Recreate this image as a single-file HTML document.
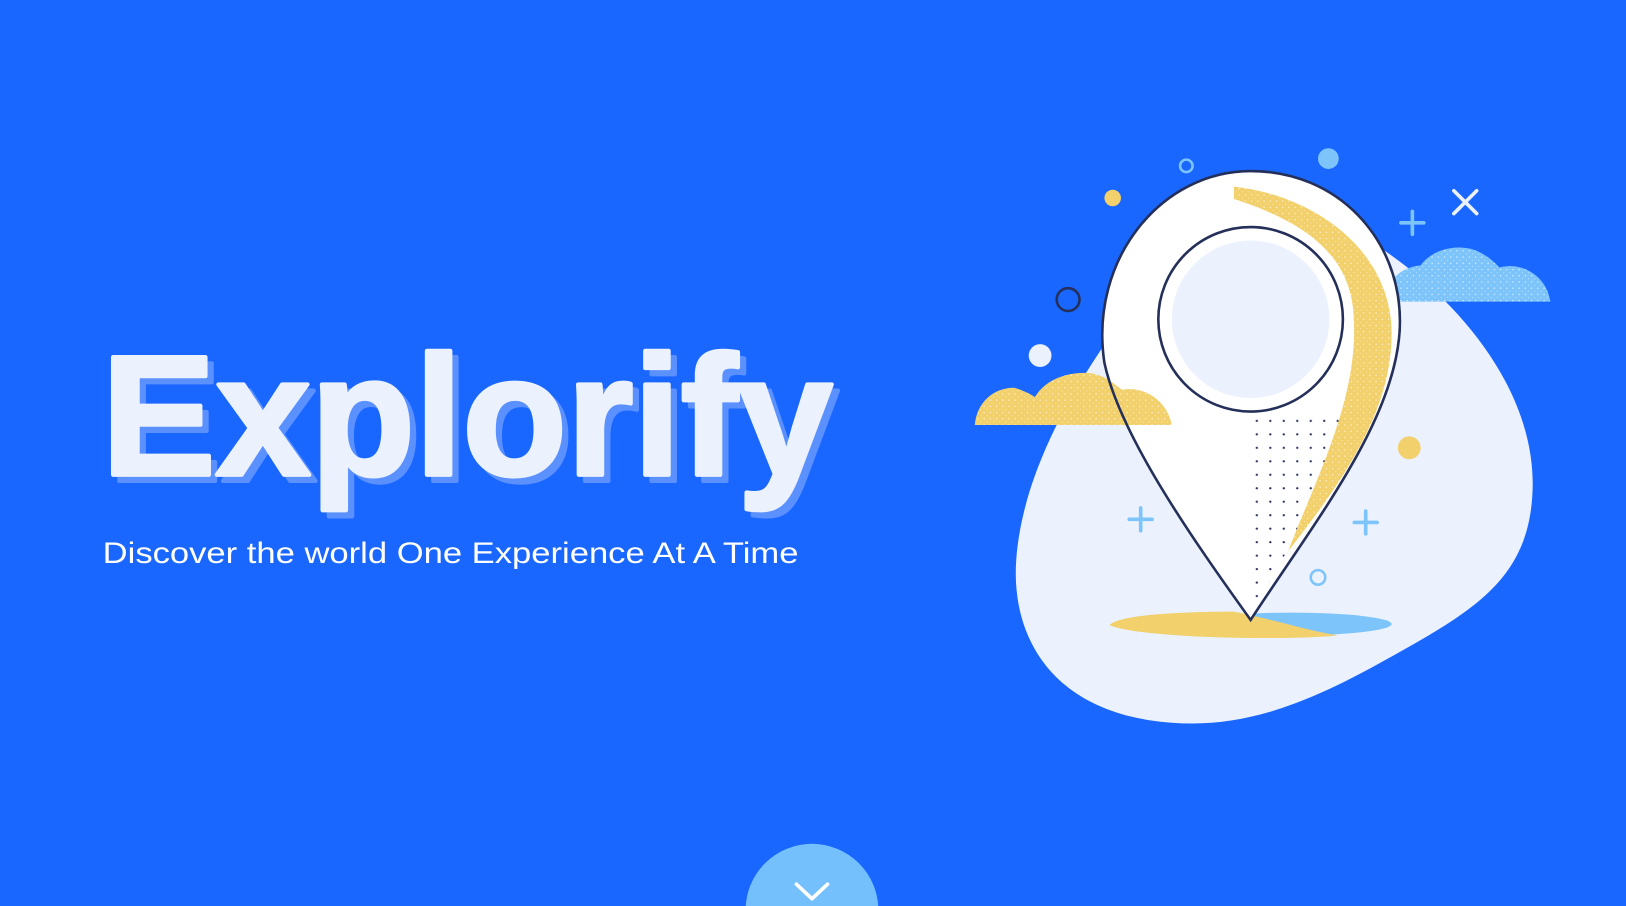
<!DOCTYPE html>
<html><head><meta charset="utf-8"><style>
html,body{margin:0;padding:0;background:#1967FF;overflow:hidden;width:1626px;height:906px}
svg{display:block}
</style></head><body>
<svg width="1626" height="906" viewBox="0 0 1568 874" preserveAspectRatio="none" xmlns="http://www.w3.org/2000/svg">
<defs>
<pattern id="dots" width="13" height="13" patternUnits="userSpaceOnUse"><circle cx="3" cy="3" r="1.1" fill="#25305A"/></pattern>
<pattern id="spk" width="6" height="6" patternUnits="userSpaceOnUse"><circle cx="1" cy="2" r="0.7" fill="#fff" opacity="0.7"/><circle cx="4" cy="5" r="0.5" fill="#fff" opacity="0.6"/></pattern>
</defs>
<rect width="1568" height="874" fill="#1967FF"/>
<g font-family="Liberation Sans, sans-serif" font-weight="bold" font-size="165" stroke-width="4" stroke-linejoin="round">
<text x="104" y="464" fill="#5B91FF" stroke="#5B91FF" textLength="705" lengthAdjust="spacingAndGlyphs">Explorify</text>
<text x="98" y="458" fill="#EBF1FD" stroke="#EBF1FD" textLength="705" lengthAdjust="spacingAndGlyphs">Explorify</text>
</g>
<text x="99" y="543" fill="#fff" font-family="Liberation Sans, sans-serif" font-size="29" textLength="671" lengthAdjust="spacingAndGlyphs">Discover the world One Experience At A Time</text>
<path d="M1290,215 C1380,260 1480,360 1478,470 C1476,560 1420,590 1330,640 C1240,690 1180,705 1110,695 C1010,680 975,610 980,540 C985,470 1020,400 1060,340 C1110,260 1200,170 1290,215Z" fill="#EBF1FD"/>
<path d="M1335,291 C1338,270 1350,258 1370,256 C1380,242 1400,236 1418,240 C1432,244 1440,252 1446,258 C1470,252 1492,268 1495,291 Z" fill="#7DC4FB"/>
<path d="M1335,291 C1338,270 1350,258 1370,256 C1380,242 1400,236 1418,240 C1432,244 1440,252 1446,258 C1470,252 1492,268 1495,291 Z" fill="url(#spk)"/>
<ellipse cx="1245" cy="602" rx="97" ry="11" fill="#7DC4FB"/>
<path d="M1070,603 C1080,592 1150,590 1190,590 C1230,598 1260,608 1290,613 C1240,618 1100,616 1070,603Z" fill="#F2D06B"/>
<path d="M1206,598 C1150,520 1080,420 1065,350 C1050,250 1120,165 1206,165 C1290,165 1350,230 1350,310 C1350,400 1270,500 1206,598Z" fill="#fff"/>
<path d="M1210,400 L1295,400 C1280,460 1250,520 1210,585 Z" fill="url(#dots)"/>
<path d="M1190,180 C1265,188 1342,240 1342,322 C1342,400 1290,470 1242,532 C1272,455 1312,380 1305,300 C1300,238 1245,210 1190,192 Z" fill="#F2D06B"/>
<path d="M1190,180 C1265,188 1342,240 1342,322 C1342,400 1290,470 1242,532 C1272,455 1312,380 1305,300 C1300,238 1245,210 1190,192 Z" fill="url(#spk)"/>
<path d="M940,410 C942,388 958,374 978,374 C988,377 995,381 998,383 C1008,366 1030,358 1052,360 C1068,363 1076,372 1082,376 C1105,372 1126,388 1130,410 Z" fill="#F2D06B"/>
<path d="M940,410 C942,388 958,374 978,374 C988,377 995,381 998,383 C1008,366 1030,358 1052,360 C1068,363 1076,372 1082,376 C1105,372 1126,388 1130,410 Z" fill="url(#spk)"/>
<path d="M1206,598 C1150,520 1080,420 1065,350 C1050,250 1120,165 1206,165 C1290,165 1350,230 1350,310 C1350,400 1270,500 1206,598Z" fill="none" stroke="#25305A" stroke-width="2.5"/>
<circle cx="1206" cy="308" r="89" fill="#fff" stroke="#25305A" stroke-width="2.5"/>
<circle cx="1206" cy="308" r="76" fill="#EBF1FD"/>
<circle cx="1073" cy="191" r="8" fill="#F2D06B"/>
<circle cx="1144" cy="160" r="6" fill="none" stroke="#7DC4FB" stroke-width="2.5"/>
<circle cx="1281" cy="153" r="10" fill="#7DC4FB"/>
<circle cx="1030" cy="289" r="11" fill="none" stroke="#25305A" stroke-width="2.5"/>
<circle cx="1003" cy="343" r="11" fill="#EBF1FD"/>
<circle cx="1359" cy="432" r="11" fill="#F2D06B"/>
<circle cx="1271" cy="557" r="7" fill="none" stroke="#7DC4FB" stroke-width="2.5"/>
<g stroke-linecap="round" stroke-width="3.5">
<path d="M1402,184 L1424,206 M1424,184 L1402,206" stroke="#EBF1FD"/>
<path d="M1362,204 V226 M1351,215 H1373" stroke="#7DC4FB"/>
<path d="M1100,490 V512 M1089,501 H1111" stroke="#7DC4FB"/>
<path d="M1317,493 V515 M1306,504 H1328" stroke="#7DC4FB"/>
</g>
<circle cx="783" cy="878" r="64" fill="#74C0FC"/>
<path d="M768,853 L783,867 L798,853" fill="none" stroke="#fff" stroke-width="3.5" stroke-linecap="round" stroke-linejoin="round"/>
</svg>
</body></html>
